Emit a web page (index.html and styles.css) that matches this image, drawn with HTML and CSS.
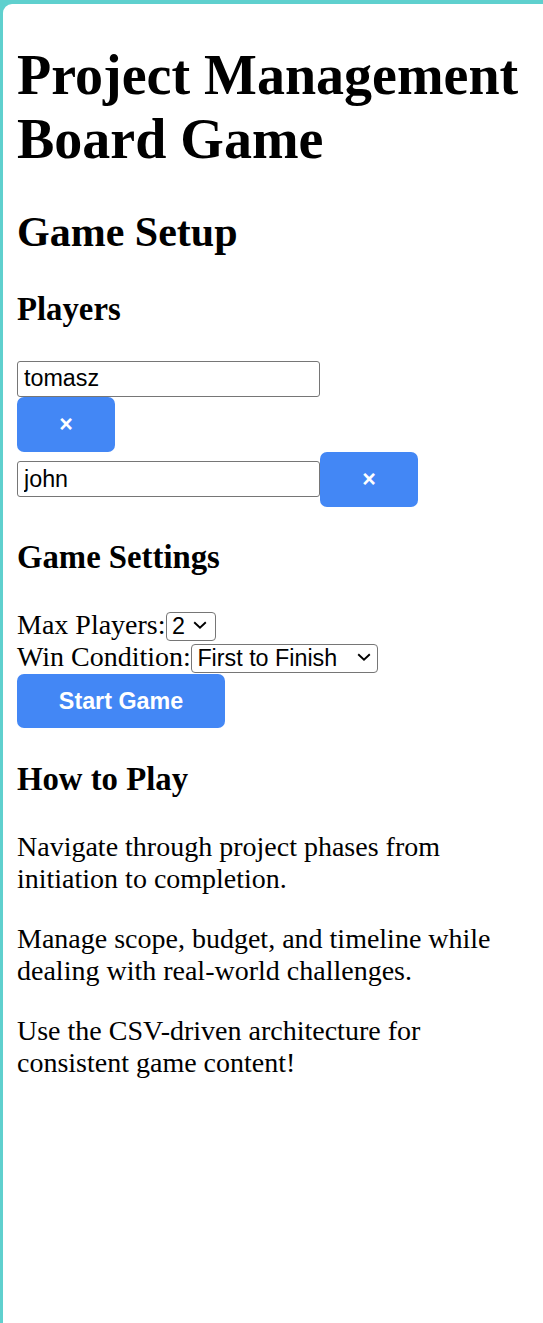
FILE: index.html
```html
<!DOCTYPE html>
<html lang="en">
<head>
<meta charset="utf-8">
<title>Project Management Board Game</title>
<link rel="stylesheet" href="styles.css">
</head>
<body>
<div class="app">
  <h1 class="title">Project Management Board Game</h1>
  <section class="setup">
    <h2 class="setup-title">Game Setup</h2>
    <h3 class="section-title">Players</h3>
    <div class="players">
      <div class="player-row player-row--stacked">
        <input class="player-input" type="text" value="tomasz">
        <button class="btn" type="button">×</button>
      </div>
      <div class="player-row">
        <input class="player-input" type="text" value="john">
        <button class="btn" type="button">×</button>
      </div>
    </div>
    <h3 class="section-title">Game Settings</h3>
    <div class="settings">
      <div class="setting"><label>Max Players:</label><span class="select-wrap"><select class="select select--small"><option>2</option><option>3</option><option>4</option></select><svg class="chevron" width="14" height="8" viewBox="0 0 14 8" aria-hidden="true"><path d="M1.2 1.2l5.8 5.4 5.8-5.4" fill="none" stroke="#000" stroke-width="1.9"/></svg></span></div>
      <div class="setting"><label>Win Condition:</label><span class="select-wrap"><select class="select select--wide"><option>First to Finish</option><option>Highest Score</option></select><svg class="chevron chevron--wide" width="14" height="8" viewBox="0 0 14 8" aria-hidden="true"><path d="M1.2 1.2l5.8 5.4 5.8-5.4" fill="none" stroke="#000" stroke-width="1.9"/></svg></span></div>
      <button class="btn btn--start" type="button">Start Game</button>
    </div>
  </section>
  <section class="howto">
    <h3 class="section-title">How to Play</h3>
    <p class="text">Navigate through project phases from initiation to completion.</p>
    <p class="text">Manage scope, budget, and timeline while dealing with real-world challenges.</p>
    <p class="text">Use the CSV-driven architecture for consistent game content!</p>
  </section>
</div>
</body>
</html>
```

FILE: styles.css
```css
html, body {
  margin: 0;
  padding: 0;
}
body {
  background: #5fd0ce;
  padding: 4px 0 0 3px;
  font-family: "Liberation Serif", "Times New Roman", serif;
  font-size: 28px;
  color: #000;
  overflow: hidden;
}
.app {
  background: #fff;
  border-top-left-radius: 9px;
  padding: 0 14px;
  min-height: 1400px;
  display: flow-root;
}
.title {
  font-size: 56px;
  font-weight: bold;
  margin: 38.5px 0 37.5px;
  line-height: normal;
}
.setup-title {
  font-size: 42px;
  margin: 34.9px 0;
}
.section-title {
  font-size: 32.76px;
  margin: 32.76px 0;
}
.player-row {
  display: flex;
  align-items: center;
}
.player-row--stacked {
  flex-direction: column;
  align-items: flex-start;
}
.player-input {
  box-sizing: border-box;
  width: 303px;
  height: 36px;
  margin: 0;
  border: 1.5px solid #767676;
  border-radius: 3px;
  padding: 0 5px 0 6px;
  font-family: "Liberation Sans", Arial, sans-serif;
  font-size: 23.3px;
  color: #000;
  background: #fff;
}
.btn {
  box-sizing: border-box;
  margin: 0;
  border: none;
  border-radius: 7px;
  background: #4387f5;
  color: #fff;
  font-family: "Liberation Sans", Arial, sans-serif;
  font-weight: bold;
  font-size: 23.3px;
  line-height: normal;
  padding: 14px 42px;
  height: 55px;
  width: 98px;
  cursor: pointer;
}
.btn--start {
  display: block;
  width: 208px;
  height: 54px;
  padding: 0;
  margin-top: 1px;
}
.setting label {
  font-size: 28px;
}
.select-wrap {
  position: relative;
  display: inline-block;
}
.select {
  -webkit-appearance: none;
  appearance: none;
  box-sizing: border-box;
  height: 29px;
  margin: 0;
  padding: 0 0 0 5.5px;
  font-family: "Liberation Sans", Arial, sans-serif;
  font-size: 23.3px;
  color: #000;
  background: #fff;
  border: 1.5px solid #767676;
  border-radius: 4px;
}
.select--small {
  width: 50px;
}
.select--wide {
  width: 187px;
}
.chevron {
  position: absolute;
  right: 9px;
  top: 50%;
  margin-top: -4px;
  pointer-events: none;
}
.chevron--wide {
  right: 7px;
}
.text {
  font-size: 28px;
  margin: 28px 0;
}
```
